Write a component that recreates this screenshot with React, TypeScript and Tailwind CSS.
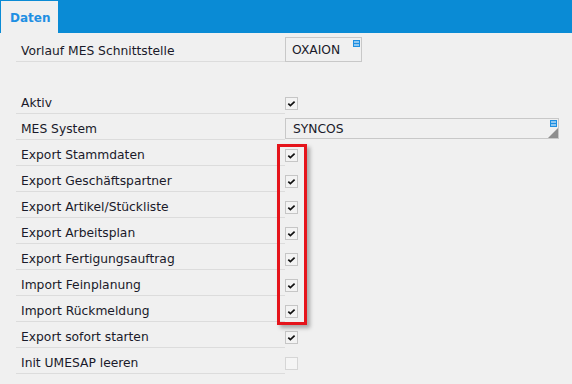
import React from 'react';

type Row =
  | { kind: 'select'; label: string; value: string; wide?: boolean }
  | { kind: 'check'; label: string; checked: boolean }
  | { kind: 'blank' };

const rows: Row[] = [
  { kind: 'select', label: 'Vorlauf MES Schnittstelle', value: 'OXAION' },
  { kind: 'blank' },
  { kind: 'check', label: 'Aktiv', checked: true },
  { kind: 'select', label: 'MES System', value: 'SYNCOS', wide: true },
  { kind: 'check', label: 'Export Stammdaten', checked: true },
  { kind: 'check', label: 'Export Geschäftspartner', checked: true },
  { kind: 'check', label: 'Export Artikel/Stückliste', checked: true },
  { kind: 'check', label: 'Export Arbeitsplan', checked: true },
  { kind: 'check', label: 'Export Fertigungsauftrag', checked: true },
  { kind: 'check', label: 'Import Feinplanung', checked: true },
  { kind: 'check', label: 'Import Rückmeldung', checked: true },
  { kind: 'check', label: 'Export sofort starten', checked: true },
  { kind: 'check', label: 'Init UMESAP leeren', checked: false },
];

const ListIcon = () => (
  <svg width="7" height="7" viewBox="0 0 7 7" className="block">
    <rect width="7" height="7" fill="#1e8fe1" />
    <rect x="1" y="1.5" width="5" height="1" fill="#fff" />
    <rect x="1" y="4.5" width="5" height="1" fill="#fff" />
  </svg>
);

const Grip = () => (
  <svg width="10" height="10" viewBox="0 0 10 10" className="block">
    <polygon points="10,0 10,10 0,10" fill="#8e8e8e" />
  </svg>
);

const Checkbox = ({ checked }: { checked: boolean }) => (
  <div
    className={
      checked
        ? 'mt-[7px] w-[13px] h-[13px] border border-[#c6c6c6] bg-[#f3f3f3] flex items-center justify-center'
        : 'mt-[7px] w-[13px] h-[13px] border border-[#d6d6d6] bg-[#f5f5f5]'
    }
  >
    {checked && (
      <svg width="11" height="11" viewBox="0 0 11 11" className="block">
        <path d="M2.3 5.6 L4.4 7.6 L8.6 3.6" fill="none" stroke="#111" strokeWidth="1.7" />
      </svg>
    )}
  </div>
);

const App: React.FC = () => {
  return (
    <div
      className="relative w-[572px] h-[384px] overflow-hidden bg-[#f0f0f0] text-[#1a1a2a]"
      style={{ fontFamily: '"DejaVu Sans", Verdana, sans-serif' }}
    >
      <div className="h-[33px] bg-[#0a8bd5] flex items-end">
        <div className="ml-[1px] w-[57px] h-[32px] bg-[#f0f0f0] pl-[9px] pt-[1px] flex items-center">
          <span className="text-[12px] font-bold text-[#1f8fe3]">Daten</span>
        </div>
      </div>

      <div className="pt-[5px]">
        {rows.map((row, i) => {
          if (row.kind === 'blank') return <div key={i} className="h-[26px]" />;
          return (
            <div key={i} className="h-[26px] flex items-start">
              <div className="ml-[16px] w-[269px] h-[24px] border-b border-[#dcdcdc] pl-[5px] pt-[4px] flex items-center text-[12.3px]">
                {row.label}
              </div>
              {row.kind === 'check' ? (
                <Checkbox checked={row.checked} />
              ) : row.wide ? (
                <div className="relative mt-[2px] w-[274px] h-[21px] border border-[#c8c8c8] pl-[7px] pt-[1px] flex items-center text-[12.3px]">
                  {row.value}
                  <div className="absolute right-[1px] top-[1px]">
                    <ListIcon />
                  </div>
                  <div className="absolute right-0 bottom-0">
                    <Grip />
                  </div>
                </div>
              ) : (
                <div className="relative -mt-[1px] w-[77px] h-[25px] border border-[#c8c8c8] pl-[6px] pt-[1px] flex items-center text-[12.3px]">
                  {row.value}
                  <div className="absolute right-[1px] top-[2px]">
                    <ListIcon />
                  </div>
                </div>
              )}
            </div>
          );
        })}
      </div>

      <div className="absolute left-[277px] top-[144px] w-[30px] h-[181px] border-[3px] border-[#e5141b] shadow-[3px_3px_4px_rgba(0,0,0,0.3)]" />
    </div>
  );
};

export default App;
